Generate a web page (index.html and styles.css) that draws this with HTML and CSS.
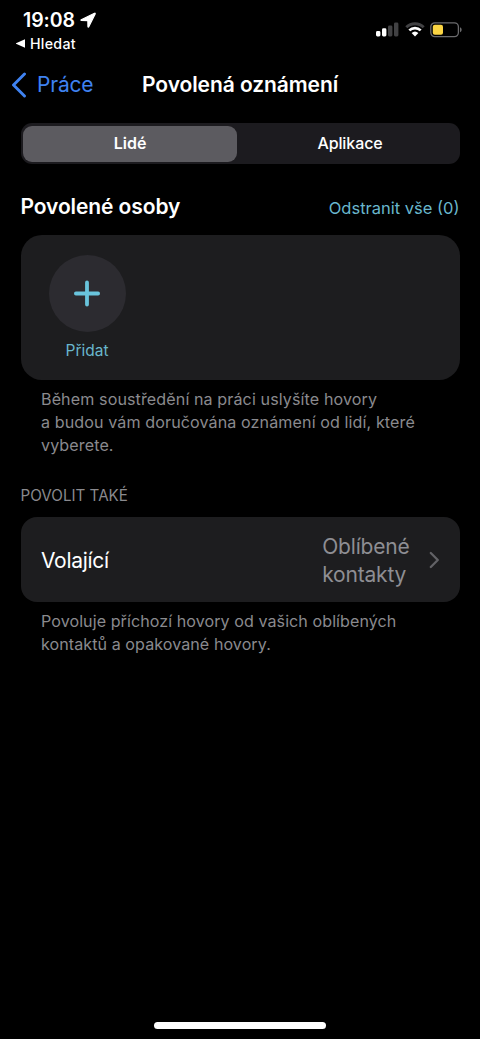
FILE: index.html
```html
<!DOCTYPE html>
<html lang="cs">
<head>
<meta charset="utf-8">
<title>Povolená oznámení</title>
<link rel="stylesheet" href="styles.css">
</head>
<body>
<div class="screen">
  <header class="status">
    <div class="status-left">
      <div class="clock"><span class="time">19:08</span>
        <svg class="location" width="16" height="16" viewBox="0 0 16 16"><path d="M14.500 1.300 1.200 7.700c-.6.3-.4.8.2.800l6.400.1.1 6c0 .7.6.8.9.200L15.200 1.900c.2-.6-.2-.9-.7-.6z" fill="#fff" stroke="#fff" stroke-width="1.100" stroke-linejoin="round"/></svg>
      </div>
      <div class="return"><svg width="9" height="9" viewBox="0 0 9 9"><path d="M9 .3v8.400L0 4.800v-.6z" fill="#fff"/></svg><span class="return-label">Hledat</span></div>
    </div>
    <div class="status-right">
      <svg width="23" height="15" viewBox="0 0 23 15"><g fill="#fff"><rect x="0" y="9" width="4.400" height="5.500" rx="1.400"/><rect x="6" y="6.300" width="4.400" height="8.200" rx="1.400"/></g><g fill="#414143"><rect x="12" y="3.500" width="4.400" height="11" rx="1.400"/><rect x="18" y=".5" width="4.400" height="14" rx="1.400"/></g></svg>
      <svg class="wifi" width="20" height="15" viewBox="0 0 20 15"><g fill="none"><path d="M1.300 5.200a12.500 12.500 0 0 1 17.400 0" stroke="#414143" stroke-width="2.900"/><path d="M4.300 8.400a8.200 8.200 0 0 1 11.400 0" stroke="#fff" stroke-width="2.700"/></g><path d="M6.600 11a5 5 0 0 1 6.800 0L10 14.500z" fill="#fff"/></svg>
      <svg class="battery" width="33" height="16" viewBox="0 0 33 16"><rect x=".8" y=".8" width="27.600" height="13.800" rx="4" fill="none" stroke="#6b6b6d" stroke-width="1.300"/><rect x="2.800" y="2.700" width="10.200" height="10" rx="2" fill="#fbd543"/><path d="M30 5.200c2.200.8 2.200 4.200 0 5z" fill="#6b6b6d"/></svg>
    </div>
  </header>
  <nav class="navbar">
    <div class="back"><svg width="16" height="26" viewBox="0 0 16 26"><path d="M13.500 2 2.500 13l11 11" fill="none" stroke="#3f82f1" stroke-width="2.900" stroke-linecap="round" stroke-linejoin="round"/></svg><span class="back-label">Práce</span></div>
    <h1 class="title">Povolená oznámení</h1>
  </nav>
  <main class="content">
    <div class="segments"><div class="segment selected">Lidé</div><div class="segment other">Aplikace</div></div>
    <div class="section-head"><h2 class="section-title">Povolené osoby</h2><span class="clear">Odstranit vše (0)</span></div>
    <section class="people">
      <div class="add">
        <div class="add-circle"><svg width="27" height="27" viewBox="0 0 27 27"><path d="M13 2.400v22.200M1.900 13.500h22.200" stroke="#69c4dc" stroke-width="3.800" stroke-linecap="round"/></svg></div>
        <span class="add-label">Přidat</span>
      </div>
    </section>
    <p class="note">Během soustředění na práci uslyšíte hovory<br>a budou vám doručována oznámení od lidí, které<br>vyberete.</p>
    <h3 class="caption">POVOLIT TAKÉ</h3>
    <section class="row">
      <span class="row-name">Volající</span>
      <span class="row-value">Oblíbené<br>kontakty</span>
      <svg width="11" height="18" viewBox="0 0 11 18"><path d="M1.800 2 8.800 9l-7 7" fill="none" stroke="#626266" stroke-width="2.300" stroke-linecap="round" stroke-linejoin="round"/></svg>
    </section>
    <p class="note tight">Povoluje příchozí hovory od vašich oblíbených<br>kontaktů a opakované hovory.</p>
  </main>
  <div class="home"></div>
</div>
</body>
</html>
```
FILE: styles.css
```css
* { box-sizing: border-box; }
body { margin: 0; background: #000; }
h1, h2, h3, p { margin: 0; }
svg { display: block; flex: none; }
span { white-space: nowrap; }
.screen {
  width: 480px; height: 1039px; background: #000; color: #fff;
  font-family: Inter, "Liberation Sans", sans-serif;
  display: flex; flex-direction: column; overflow: hidden;
}
.status { height: 60px; display: flex; justify-content: space-between; padding: 8px 17px 0 16px; }
.clock { display: flex; align-items: center; gap: 5px; height: 24px; padding-left: 7px; }
.time { font-size: 19.5px; font-weight: 600; line-height: 24px; letter-spacing: -.1px; }
.return { display: flex; align-items: center; gap: 5px; height: 23px; }
.return-label { font-size: 14.2px; font-weight: 500; line-height: 20px; letter-spacing: .3px; }
.status-right { display: flex; align-items: flex-start; padding-top: 14px; }
.wifi { margin-left: 6px; }
.battery { margin-left: 5px; }
.navbar { height: 49px; display: grid; grid-template-columns: 131px 1fr; align-items: center; padding-left: 11px; }
.back { display: flex; align-items: center; gap: 10px; color: #3f82f1; font-size: 21px; line-height: 26px; letter-spacing: -.2px; }
.title { font-size: 21px; font-weight: 600; line-height: 26px; letter-spacing: -.08px; white-space: nowrap; }
.content { flex: 1; padding: 14px 20.500px 0; }
.segments { height: 41px; border-radius: 11px; background: #1c1b1f; padding: 2.500px; display: grid; grid-template-columns: 214px 1fr; }
.segment { display: flex; align-items: center; justify-content: center; font-size: 16px; font-weight: 500; border-radius: 9px; padding-bottom: 1.500px; }
.selected { background: #5c5b60; font-weight: 600; }
.other { padding-left: 6px; letter-spacing: -.1px; }
.section-head { height: 71px; padding-top: 29px; display: flex; justify-content: space-between; align-items: flex-start; }
.section-title { font-size: 21px; font-weight: 600; line-height: 28px; letter-spacing: -.1px; }
.clear { color: #69b7cd; font-size: 16.500px; line-height: 31px; }
.people { height: 145px; border-radius: 21px; background: #1d1d1f; padding: 20px 27.500px 0; }
.add { width: 78px; display: flex; flex-direction: column; align-items: center; gap: 9px; }
.add-circle { width: 77px; height: 77px; border-radius: 50%; background: #2c2b30; display: grid; place-items: center; }
.add-label { color: #69b7cd; font-size: 15.500px; line-height: 20px; }
.note { padding: 8px 20.500px 0; color: #8a8a8e; font-size: 16.100px; line-height: 23.200px; letter-spacing: .1px; white-space: nowrap; }
.tight { letter-spacing: .06px; }
.caption { font-size: 15.200px; font-weight: 400; line-height: 20px; color: #8a8a8e; margin: 28px 0 11px; }
.row { height: 85px; border-radius: 16px; background: #1d1d1f; display: flex; align-items: center; padding: 2px 20px 0 20.500px; }
.row-name { flex: 1; font-size: 21px; letter-spacing: -.3px; }
.row-value { font-size: 21px; line-height: 28px; color: #8e8e93; margin-right: 19px; letter-spacing: -.2px; padding-top: 1px; }
.home { width: 172px; height: 7px; border-radius: 4px; background: #fff; margin: 0 auto 10px; }
```
